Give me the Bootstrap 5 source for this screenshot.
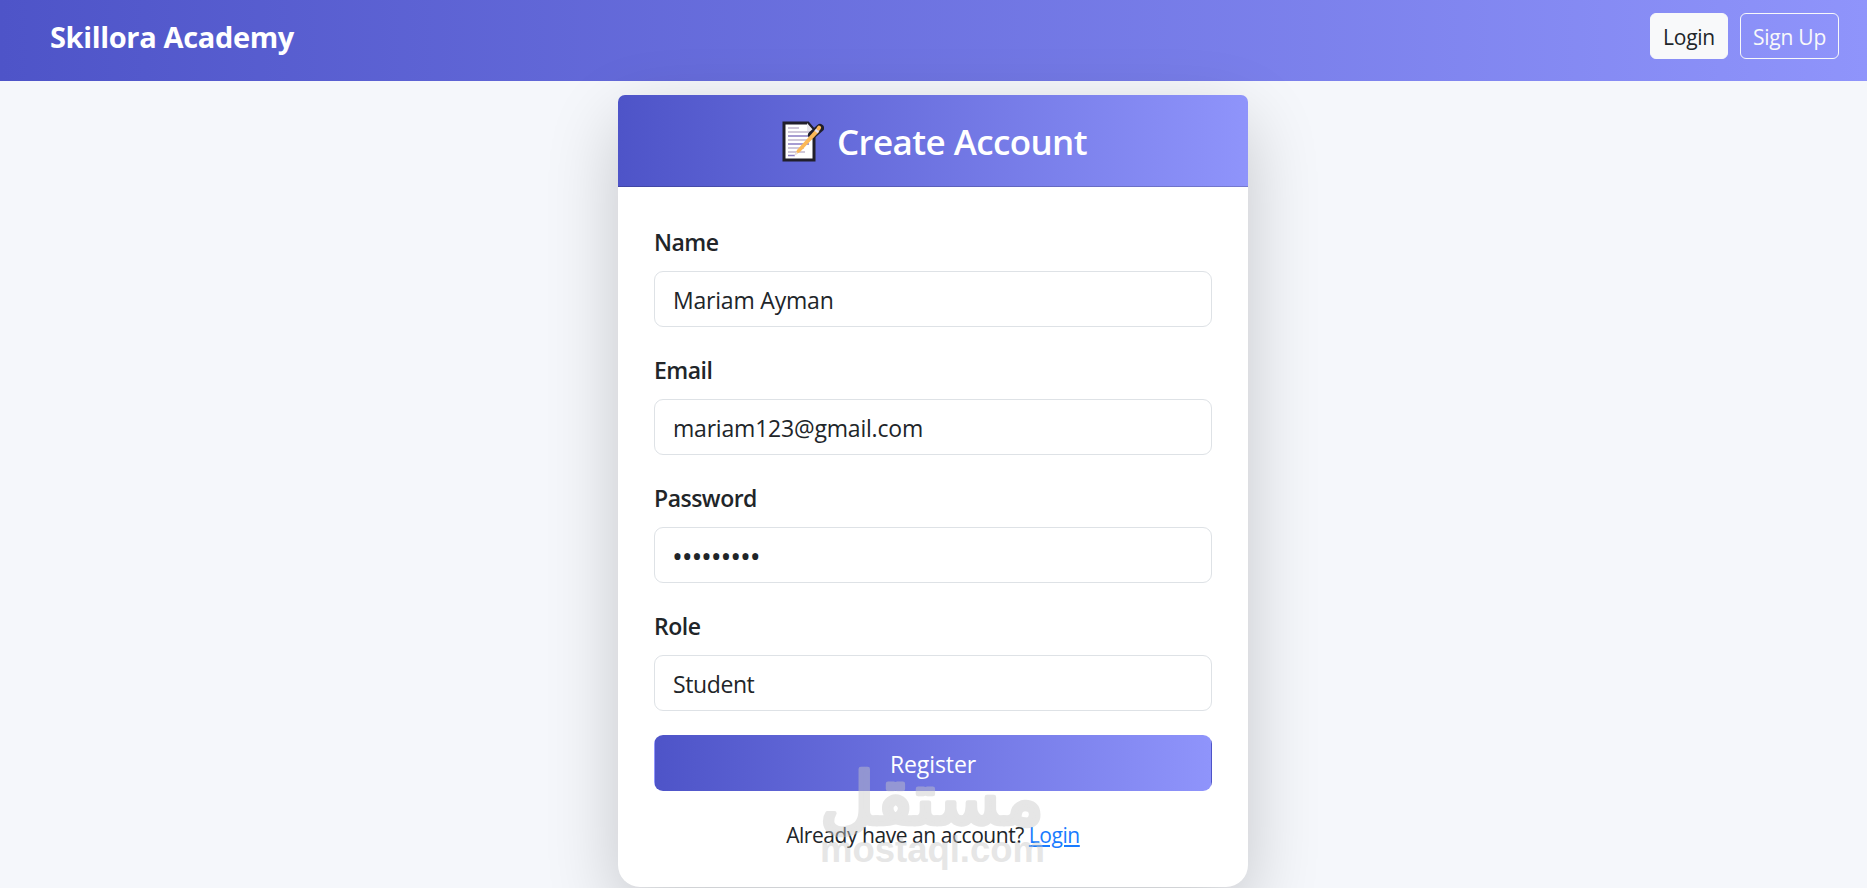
<!DOCTYPE html>
<html lang="en">
<head>
    <meta charset="UTF-8">
    <meta name="viewport" content="width=device-width, initial-scale=1">
    <title>Skillora Academy - Create Account</title>
    <link href="https://cdn.jsdelivr.net/npm/bootstrap@5.3.0/dist/css/bootstrap.min.css" rel="stylesheet">
    <style>
        html {
            font-size: 24px;
        }
        body {
            background: #f5f7fb;
            font-family: "Segoe UI", "Open Sans", sans-serif;
            height: 888px;
            overflow: hidden;
        }
        .brand-gradient {
            background: linear-gradient(90deg, #4e54c8, #8f94fb);
        }
        .site-nav {
            height: 81px;
            padding: 13px 28px 0 50px;
        }
        .site-nav .navbar-brand {
            font-size: 29px;
            line-height: 45px;
            padding: 1px 0 0;
            letter-spacing: -.35px;
        }
        .site-nav .btn {
            height: 46px;
            padding: 6px 0;
            line-height: 34px;
            letter-spacing: -.25px;
        }
        .site-nav .btn-login {
            width: 78px;
            color: #212529;
        }
        .btn-signup { width: 99px; }
        .register-card {
            width: 630px;
            height: 792px;
            margin-top: 14px;
            margin-right: 1px;
            border-radius: 22px;
            box-shadow: 0 24px 72px rgba(0, 0, 0, .2);
        }
        .register-card .card-header {
            height: 92px;
            padding: 14px 23px 12px 25px;
            border-radius: 7px 7px 0 0;
        }
        .register-card h3 {
            font-size: 35px;
            line-height: 43px;
            letter-spacing: -.6px;
        }
        .note-icon {
            width: 42px;
            height: 42px;
            margin: 1px 13px 0 1px;
        }
        .form-label {
            font-size: 23px;
            line-height: 36px;
            padding-top: 1px;
            margin-bottom: 11px;
            letter-spacing: -.5px;
        }
        .register-card .form-control {
            height: 56px;
            padding: 10px 18px 8px;
            font-size: 23px;
            border-color: #dee2e6;
            border-radius: 9px;
            letter-spacing: -.2px;
        }
        .register-card #password {
            padding: 9px 17px;
            font-size: 29px;
            letter-spacing: -1.2px;
        }
        .register-card #role {
            letter-spacing: -.4px;
        }
        .btn-register {
            height: 56px;
            padding-top: 11px;
            font-size: 23px;
            border-color: transparent;
            border-radius: 9px;
            letter-spacing: -.1px;
        }
        .login-hint {
            font-size: 21px;
            line-height: 36px;
            margin-top: 26px;
            letter-spacing: -.45px;
        }
        .login-hint a {
            color: #187bff;
        }
        .watermark {
            position: absolute;
            left: 202px;
            top: 670px;
            width: 226px;
            height: 110px;
            overflow: visible;
            opacity: .45;
            pointer-events: none;
        }
    </style>
</head>
<body>
<nav class="site-nav brand-gradient d-flex justify-content-between align-items-start">
    <a class="navbar-brand fw-bold text-white" href="#">Skillora Academy</a>
    <div class="d-flex gap-2">
        <a class="btn btn-light btn-sm btn-login" href="#">Login</a>
        <a class="btn btn-outline-light btn-sm btn-signup" href="#">Sign Up</a>
    </div>
</nav>

<div class="d-flex justify-content-center">
    <div class="card register-card border-0">
        <div class="card-header brand-gradient text-white d-flex justify-content-center align-items-center">
            <svg class="note-icon" viewBox="0 0 42 42">
                <path d="M2 2h24l6 7v30H2z" fill="#fff" stroke="#211f2b" stroke-width="3"/>
                <path d="M25 2l7 8h-7z" fill="#e8e6ec"/>
                <g stroke="#d0c8da" stroke-width="1.8">
                    <path d="M6 7h11M6 11h22M6 19h20M6 27h16M6 31h17"/>
                </g>
                <path d="M6 15h20M6 23h21M6 34.5h7" stroke="#8a7cc4" stroke-width="1.3"/>
                <path d="M30 14l8-7" stroke="#211f2b" stroke-width="8" stroke-linecap="round"/>
                <path d="M13 34l2-5L34 8l3 3-19 20z" fill="#fbb858"/>
                <path d="M34 11l2-2.5" stroke="#e8dfe6" stroke-width="4"/>
                <path d="M36.5 7.5l.6-.8" stroke="#fbb858" stroke-width="4" stroke-linecap="round"/>
                <path d="M12 35l2.6-4.2 1.5 1.6z" fill="#e6dfe6"/>
            </svg>
            <h3 class="mb-0 fw-semibold">Create Account</h3>
        </div>
        <div class="card-body p-0 px-4 pt-4">
            <form>
                <div class="mb-3">
                    <label class="form-label fw-semibold" for="name">Name</label>
                    <input type="text" class="form-control" id="name" value="Mariam Ayman">
                </div>
                <div class="mb-3">
                    <label class="form-label fw-semibold" for="email">Email</label>
                    <input type="email" class="form-control" id="email" value="mariam123@gmail.com">
                </div>
                <div class="mb-3">
                    <label class="form-label fw-semibold" for="password">Password</label>
                    <input type="password" class="form-control" id="password" value="mariam123">
                </div>
                <div class="mb-3">
                    <label class="form-label fw-semibold" for="role">Role</label>
                    <select class="form-control" id="role">
                        <option>Student</option>
                        <option>Instructor</option>
                    </select>
                </div>
                <button type="button" class="btn btn-register brand-gradient text-white w-100">Register</button>
            </form>
            <p class="login-hint text-center mb-0">Already have an account? <a href="#">Login</a></p>
        </div>

        <!-- Watermark laid over the bottom of the form -->
        <svg class="watermark" viewBox="0 0 226 110" fill="#c8c8c8">
            <text x="112" y="59" text-anchor="middle" direction="rtl" font-family="DejaVu Sans" font-size="72" textLength="224" lengthAdjust="spacingAndGlyphs" stroke="#c8c8c8" stroke-width="4.5" stroke-linejoin="round">مستقل</text>
            <text x="0" y="97" font-family="Liberation Sans" font-weight="700" font-size="36" textLength="225" lengthAdjust="spacingAndGlyphs">mostaql.com</text>
        </svg>
    </div>
</div>
<script src="https://cdn.jsdelivr.net/npm/bootstrap@5.3.0/dist/js/bootstrap.bundle.min.js"></script>
</body>
</html>
